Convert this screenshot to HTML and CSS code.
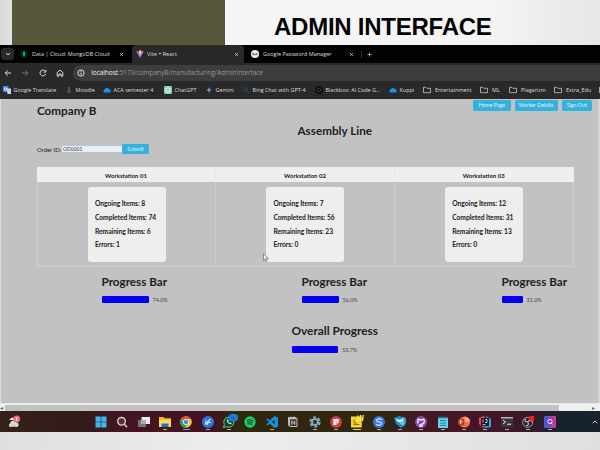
FILE: index.html
```html
<!DOCTYPE html>
<html lang="en">
<head>
<meta charset="utf-8">
<title>Admin Interface</title>
<link rel="stylesheet" href="styles.css">
</head>
<body>
<header class="slide-head">
  <div class="olive"></div>
  <h1>ADMIN INTERFACE</h1>
</header>
<section class="browser">
  <div class="tabs">
    <span class="tab-menu"><svg viewBox="0 0 8 8"><path d="M2 3l2 2 2-2"/></svg></span>
    <div class="tab t1">
      <svg class="fav" viewBox="0 0 8 8"><circle cx="4" cy="4" r="3.5" fill="#05271d"/><path d="M4 .8Q6.2 3.5 4 7Q1.8 3.5 4 .8" fill="#12b879"/></svg>
      <span>Data | Cloud: MongoDB Cloud</span><svg class="x" viewBox="0 0 6 6"><path d="M1 1l4 4M5 1L1 5"/></svg>
    </div>
    <div class="tab t2">
      <svg class="fav" viewBox="0 0 8 8"><path d="M0 1l4 7 4-7-4 .7z" fill="#a66bf4"/><path d="M3 .4l2.5-.2-.6 2H6L4 6l.1-2.5H3z" fill="#ffd343"/></svg>
      <span>Vite + React</span><svg class="x" viewBox="0 0 6 6"><path d="M1 1l4 4M5 1L1 5"/></svg>
    </div>
    <div class="tab t3">
      <svg class="fav" viewBox="0 0 8 8"><circle cx="4" cy="4" r="4" fill="#f3f3f3"/><path d="M1.2 3.4h2M1.2 4.7h5.5M4.5 3.4h2" stroke="#555" stroke-width=".8"/></svg>
      <span>Google Password Manager</span><svg class="x" viewBox="0 0 6 6"><path d="M1 1l4 4M5 1L1 5"/></svg>
    </div>
    <i class="sep"></i>
    <svg class="x plus" viewBox="0 0 6 6"><path d="M3 .5v5M.5 3h5"/></svg>
  </div>
  <div class="address">
    <svg class="nav" viewBox="0 0 8 8"><path d="M7 4H1.2M3.8 1.4L1.2 4l2.6 2.6"/></svg>
    <svg class="nav dim" viewBox="0 0 8 8"><path d="M1 4h5.8M4.2 1.4L6.8 4 4.2 6.6"/></svg>
    <svg class="nav" viewBox="0 0 8 8"><path d="M6.6 5A2.9 2.9 0 1 1 6.3 2.3M6.8 .9v2.2H4.6"/></svg>
    <svg class="nav" viewBox="0 0 8 8"><path d="M1.2 3.5L4 1.1l2.8 2.4v3.6H5V5H3v2.1H1.2z"/></svg>
    <div class="url">
      <svg class="nav" viewBox="0 0 8 8"><circle cx="4" cy="4" r="3.1"/><path d="M4 3.6v2.1M4 2.1v.8"/></svg>
      <span><b>localhost</b>:5173/companyB/manufacturing/AdminInterface</span>
    </div>
  </div>
  <nav class="bookmarks">
    <a class="w62"><svg viewBox="0 0 8 8"><rect width="5.5" height="6" rx=".7" fill="#4b8af1"/><path d="M3.5 2.5H8V8H4.5z" fill="#c9d2df"/><circle cx="2.6" cy="3" r="1.2" fill="none" stroke="#fff" stroke-width=".7"/></svg><span>Google Translate</span></a>
    <a class="w38"><svg viewBox="0 0 8 8"><path d="M3 1h2v2l1 4H2l1-4z" fill="#67502f"/></svg><span>Moodle</span></a>
    <a class="w61"><svg viewBox="0 0 8 8"><path d="M1.5 6.5a1.6 1.6 0 0 1 0-3A2.6 2.6 0 0 1 6 3a1.8 1.8 0 0 1 .5 3.5z" fill="#1596e4"/></svg><span>ACA semester 4</span></a>
    <a class="w41"><svg viewBox="0 0 8 8"><rect width="8" height="8" rx="1" fill="#8ccdb5"/><circle cx="4" cy="4" r="2.2" fill="none" stroke="#e9fff7"/></svg><span>ChatGPT</span></a>
    <a class="w37"><svg viewBox="0 0 8 8"><path d="M4 .8Q4.3 3.7 7.2 4 4.3 4.3 4 7.2 3.7 4.3.8 4 3.7 3.7 4 .8z" fill="#7093ef"/></svg><span>Gemini</span></a>
    <a class="w73"><svg viewBox="0 0 8 8"><g fill="none" stroke="#1d4a6a"><circle cx="3.5" cy="3.5" r="2"/><path d="M5 5l2 2"/></g></svg><span>Bing Chat with GPT-4</span></a>
    <a class="w74"><svg viewBox="0 0 8 8"><circle cx="4" cy="4" r="4" fill="#101010"/><circle cx="4" cy="4" r="1.7" fill="none" stroke="#444" stroke-width=".7"/></svg><span>Blackbox: AI Code G...</span></a>
    <a class="w34"><svg viewBox="0 0 8 8"><path d="M1.5 6.5a1.6 1.6 0 0 1 0-3A2.6 2.6 0 0 1 6 3a1.8 1.8 0 0 1 .5 3.5z" fill="#1596e4"/></svg><span>Kuppi</span></a>
    <a class="w57 folder"><svg viewBox="0 0 8 8"><path d="M.5 1.3h2.4l.9 1h3.7v4.4h-7z"/></svg><span>Entertainment</span></a>
    <a class="w29 folder"><svg viewBox="0 0 8 8"><path d="M.5 1.3h2.4l.9 1h3.7v4.4h-7z"/></svg><span>ML</span></a>
    <a class="w45 folder"><svg viewBox="0 0 8 8"><path d="M.5 1.3h2.4l.9 1h3.7v4.4h-7z"/></svg><span>Plagarizm</span></a>
    <a class="w44 folder"><svg viewBox="0 0 8 8"><path d="M.5 1.3h2.4l.9 1h3.7v4.4h-7z"/></svg><span>Extra_Edu</span></a>
    <a class="folder"><svg viewBox="0 0 8 8"><path d="M.5 1.3h2.4l.9 1h3.7v4.4h-7z"/></svg></a>
  </nav>
</section>
<main class="page">
  <div class="top">
    <h2>Company B</h2>
    <div class="actions"><button class="home">Home Page</button><button class="worker">Worker Details</button><button class="sign">Sign Out</button></div>
  </div>
  <h2 class="line-title">Assembly Line</h2>
  <form class="order"><label>Order ID:</label><input value="OD0001"><button type="button">Submit</button></form>
  <div class="table">
    <div class="th">Workstation 01</div><div class="th">Workstation 02</div><div class="th">Workstation 03</div>
    <div class="td"><div class="card"><p>Ongoing Items: 8</p><p>Completed Items: 74</p><p>Remaining Items: 6</p><p>Errors: 1</p></div></div>
    <div class="td"><div class="card"><p>Ongoing Items: 7</p><p>Completed Items: 56</p><p>Remaining Items: 23</p><p>Errors: 0</p></div></div>
    <div class="td"><div class="card"><p>Ongoing Items: 12</p><p>Completed Items: 31</p><p>Remaining Items: 13</p><p>Errors: 0</p></div></div>
  </div>
  <div class="bars">
    <div class="prog"><h2>Progress Bar</h2><div class="meter"><i style="width:47px"></i><span>74.0%</span></div></div>
    <div class="prog"><h2>Progress Bar</h2><div class="meter"><i style="width:37px"></i><span>56.0%</span></div></div>
    <div class="prog"><h2>Progress Bar</h2><div class="meter"><i style="width:21px"></i><span>31.0%</span></div></div>
  </div>
  <div class="prog overall"><h2>Overall Progress</h2><div class="meter"><i style="width:46.5px"></i><span>53.7%</span></div></div>
  <svg class="cursor" viewBox="0 0 6 9"><path d="M.5.5v6.8l1.6-1.4 1 2.4 1.1-.5-1-2.3h2.2z"/></svg>
</main>
<div class="scroll"><b class="left">◂</b><i></i><b>▸</b></div>
<footer class="taskbar">
  <div class="weather"><svg viewBox="0 0 14 14"><path d="M2 5q4-5 6 0z" fill="#e9e9ee"/><path d="M3 12a2 2 0 0 1 0-3.5 3.5 3.5 0 0 1 6.6-1A2.3 2.3 0 0 1 10 12z" fill="#d9dce5"/><path d="M3 12q4-4 7 0z" fill="#eab05a"/><circle cx="9.7" cy="4" r="3.5" fill="#e8737b"/><path d="M9.7 2.2v3.5" stroke="#fff"/></svg></div>
  <div class="apps">
    <span><svg viewBox="0 0 12 12"><path d="M.5.5h5.2v5.2H.5zM6.3.5h5.2v5.2H6.3zM.5 6.3h5.2v5.2H.5zM6.3 6.3h5.2v5.2H6.3z" fill="#3fb7ed"/></svg></span>
    <span><svg viewBox="0 0 12 12"><circle cx="5.5" cy="5.3" r="3.8" fill="#52303a" stroke="#d8cdd2" stroke-width="1.4"/><path d="M8.3 8.3l2.8 2.9" stroke="#d8cdd2" stroke-width="1.5"/></svg></span>
    <span><svg viewBox="0 0 12 12"><rect x="0" y="4" width="8" height="7" fill="#77777a"/><rect x="3.5" y="1" width="8.5" height="7" fill="#ebebeb"/><path d="M3.5 4H8v4H3.5z" fill="#aaa"/></svg></span>
    <span class="run amber"><svg viewBox="0 0 12 12"><path d="M0 1h4.5l1.3 1.3H12V11H0z" fill="#f6b92d"/><path d="M0 4h12v7H0z" fill="#ffd95f"/><path d="M2.5 11V7.5h7V11z" fill="#2370bc"/></svg></span>
    <span class="run blue"><svg viewBox="0 0 12 12"><circle cx="6" cy="6" r="5.8" fill="#f3c63e"/><path d="M6 6L1 3A5.8 5.8 0 0 1 11 3H6z" fill="#de5144"/><path d="M1 3a5.8 5.8 0 0 0 4 8.7L8 7 4 7z" fill="#32a05c"/><circle cx="6" cy="6" r="2.7" fill="#4185ef" stroke="#fff" stroke-width=".8"/></svg></span>
    <span class="run"><svg viewBox="0 0 12 12"><circle cx="6" cy="6" r="6" fill="#2874e8"/><path d="M3 8.5L8.5 3M3 6.5h6M5 9L7 5M3.5 4.5l1 1" fill="none" stroke="#cfe4ff" stroke-width="1.2"/></svg></span>
    <span class="run"><svg class="chat" viewBox="0 0 12 12"><path d="M.5 11.5l.9-3A5 5 0 1 1 3.5 10.6z" fill="#123d2a" stroke="#6ec790"/><path d="M3.6 3.7q0 4 4.5 4.8l.7-1.6-1.5-.7-.7.7-1.4-1.3.6-.8-.7-1.6z" fill="#a5e4b6"/><rect x="5.5" y="-2" width="9.5" height="7.5" rx="3.7" fill="#217ed8"/><path d="M8 1h4M8 2.8h4" stroke="#1c5796" stroke-width=".8"/></svg></span>
    <span><svg viewBox="0 0 12 12"><circle cx="6" cy="6" r="5.7" fill="#20cf64"/><path d="M2.7 4.1q3.8-1 6.8.6M3 6.1q3.3-.8 6 .6M3.4 8q2.5-.6 4.8.5" fill="none" stroke="#103c20"/></svg></span>
    <span class="run amber"><svg viewBox="0 0 12 12"><path d="M8.5 0L12 1.4v9.2L8.5 12 3.8 7.7 1.4 9.6.2 8.8 3 6 .2 3.2l1.2-.8 2.4 1.9zM8.7 3.7L5.7 6l3 2.3z" fill="#188fd7"/></svg></span>
    <span><svg viewBox="0 0 12 12"><path d="M1 1l7-.3L10.5 2.5V11H3L1 9z" fill="#bbb"/><path d="M3 3.3h6.5V10H3z" fill="#3a3835"/><path d="M4.8 8.7V4.9l2.9 3.5V4.8" fill="none" stroke="#ccc"/></svg></span>
    <span class="run"><svg viewBox="0 0 12 12"><circle cx="6" cy="6" r="4.6" fill="none" stroke="#8d9baa" stroke-width="2.3" stroke-dasharray="3 1.8"/><circle cx="6" cy="6" r="3" fill="#2d3c49" stroke="#91aeca" stroke-width="1.6"/></svg></span>
    <span class="run"><svg viewBox="0 0 12 12"><circle cx="6" cy="6" r="5.9" fill="#dc3940"/><path d="M3.3 3h5.4v3.3L6 9H3.3z" fill="#fff"/><path d="M6 9V6.3h2.7z" fill="#f3a3a6"/></svg></span>
    <span class="run wide"><svg class="chat" viewBox="0 0 12 12"><path d="M0 .5h10.8v11H0z" fill="#f5d532"/><path d="M2.5 8.5h6M3 3.5V7h3" fill="none" stroke="#8d731d"/><path d="M7-.5l-.6 6M9.6-1L9 5M12.2-1l-.8 6" stroke="#ffe763" stroke-width="1.4"/></svg></span>
    <span class="run"><svg viewBox="0 0 12 12"><circle cx="6" cy="6" r="6" fill="#3975dc"/><path d="M9 3.8Q5.5 1.5 3.4 4.2 3 5.5 6 6t2.7 1.8Q6.5 10.5 3 8.2" fill="none" stroke="#b9dbff" stroke-width="1.3"/></svg></span>
    <span class="run"><svg viewBox="0 0 12 12"><path d="M0 2l5-2 7 2v6l-5 4-5-4z" fill="#218ac3"/><path d="M1 2q5 4 9-1L8 7 4 6z" fill="#d8f3fb"/><path d="M5 7l6-4-1 7z" fill="#65c9e4"/></svg></span>
    <span class="run"><svg viewBox="0 0 12 12"><circle cx="6" cy="6" r="6" fill="#874bad"/><path d="M3.2 7.5Q2 5 3.3 3l1.5.8h2.4L8.7 3Q10 5 8.8 7.2 7.8 8 7 8v2H5V8" fill="none" stroke="#fff" stroke-width="1.3"/></svg></span>
    <span class="run"><svg viewBox="0 0 12 12"><path d="M1 1h10v11H1z" fill="#65d0ea"/><path d="M1 .7h10v1.6H1z" fill="#246a91"/><path d="M3 4.5h6M3 7h6M3 9.4h6" stroke="#217aa0"/></svg></span>
    <span class="run"><svg viewBox="0 0 12 12"><circle cx="6.5" cy="6" r="5.6" fill="#f07142"/><path d="M6.5.4A5.6 5.6 0 0 1 12 6H6.5z" fill="#ffa084"/><rect y="3" width="6.3" height="6.3" rx="1" fill="#b93a1c"/><path d="M2.3 8V4.6h1.2q1.3 1-.1 1.8H2.3" fill="none" stroke="#fff" stroke-width=".8"/></svg></span>
    <span class="run"><svg viewBox="0 0 12 12"><path d="M0 2l5-2 3 5-4 7-4-4z" fill="#ed4466"/><path d="M7 0l5 3v8l-7 1 3-7z" fill="#28a9ed"/><path d="M2 2h8v8H2z" fill="#17131b"/><path d="M4 3.5v3M6.3 3.5H8v3H6M3.5 8.7h3" fill="none" stroke="#fff" stroke-width=".8"/></svg></span>
    <span class="run"><svg viewBox="0 0 12 12"><path d="M0 1h12v10H0z" fill="#363638"/><path d="M0 1h12v1.5H0z" fill="#b4b4b4"/><path d="M2 4l2.5 2L2 8M6 8.2h4" fill="none" stroke="#eee"/></svg></span>
    <span class="run"><svg viewBox="0 0 12 12"><circle cx="5.7" cy="6.3" r="5" fill="#25252b" stroke="#aaa" stroke-width=".9"/><path d="M5.7 6Q2 6 3.4 2.8M5.7 6Q8 2.8 10 6M5.7 6q2 3-1.6 4" fill="none" stroke="#c4c4c4" stroke-width="1.2"/><circle cx="9.9" cy="2.2" r="3" fill="#ef1d24"/></svg></span>
    <span class="run"><svg viewBox="0 0 12 12"><defs><linearGradient id="g"><stop stop-color="#2565e8"/><stop offset="1" stop-color="#e83676"/></linearGradient></defs><rect width="12" height="12" rx="1" fill="url(#g)"/><rect x="2" y="2" width="8" height="8" rx="2" fill="#843cc1"/><circle cx="6" cy="5.5" r="2.1" fill="none" stroke="#eee"/><path d="M6.8 6.5l1.7 2" stroke="#eee"/></svg></span>
  </div>
  <svg class="chev" viewBox="0 0 6 6"><path d="M.7 4.3L3 2l2.3 2.3"/></svg>
</footer>
</body>
</html>
```
FILE: styles.css
```css
* { box-sizing: border-box; }
body { margin: 0; width: 600px; height: 450px; overflow: hidden; background: linear-gradient(100deg, #dadada, #ededed 45%, #dfdfdf); font-family: Lato, "Liberation Sans", sans-serif; color: #202020; }
svg { display: block; flex: none; }
h1, h2, p { margin: 0; }
h2 { font-size: 11.7px; line-height: 14px; font-weight: 700; white-space: nowrap; }

.slide-head { height: 45px; display: flex; padding-left: 12px; background: linear-gradient(90deg, #d9d9d7 0, #e1e1df 12px, #f5f5f5 224px, #f4f4f4 490px, #e6e6e6 600px); }
.olive { width: 212.5px; background: #58563b; }
h1 { margin: 13px 0 0 49.5px; font: 700 24px/28px "Liberation Sans", sans-serif; letter-spacing: -.25px; white-space: nowrap; color: #050505; }

.browser { height: 54px; background: #292929; color: #ddd; font-family: "Open Sans", sans-serif; }
.tabs { height: 18px; display: flex; align-items: center; background: #020202; font-size: 5.5px; }
.tab-menu { width: 13px; height: 12px; margin-left: 1px; border-radius: 3px; background: #292929; display: grid; place-items: center; }
.tab-menu svg { width: 8px; height: 8px; fill: none; stroke: #ddd; }
.tab { height: 18px; display: flex; align-items: center; white-space: nowrap; }
.tab span { flex: 1; }
.fav { width: 8px; height: 8px; margin-right: 3px; }
.x { width: 5px; height: 5px; fill: none; stroke: #ddd; stroke-width: .8; }
.t1 { width: 118px; padding: 0 8px 0 6px; }
.t1 .fav { margin-right: 4px; }
.t2 { width: 112px; padding: 0 5px 0 4px; background: #292929; border-radius: 4px 4px 0 0; }
.t3 { width: 117px; padding: 0 7px; }
.t3 .fav { margin-right: 4px; }
.sep { width: 1px; height: 7px; background: #303030; }
.plus { margin-left: 5px; }
.address { height: 18px; display: flex; align-items: center; gap: 9.3px; padding: 1px 0 0 4px; }
.nav { width: 8px; height: 8px; fill: none; stroke: #ddd; stroke-width: 1; }
.dim { stroke: #777; }
.url { flex: 1; height: 16px; display: flex; align-items: center; gap: 6px; padding-left: 4px; border-radius: 8px 0 0 8px; background: #3d3d3d; color: #969696; font-size: 6.5px; white-space: nowrap; }
.url b { font-weight: 400; color: #eee; }
.url span { letter-spacing: -.05px; }
.bookmarks { height: 18px; padding-left: 3px; display: flex; align-items: center; font-size: 5.45px; white-space: nowrap; overflow: hidden; }
.bookmarks a { flex: none; display: flex; align-items: center; gap: 2.5px; }
.bookmarks svg { width: 8px; height: 8px; }
.folder svg { fill: none; stroke: #c8c8c8; stroke-width: .8; }
.bookmarks .folder { gap: 4px; }
.w62 { width: 62px; } .w38 { width: 38px; } .w61 { width: 61px; } .w41 { width: 41px; }
.w37 { width: 37px; } .w73 { width: 73px; } .w74 { width: 74px; } .w34 { width: 34px; }
.w57 { width: 57px; } .w29 { width: 29px; } .w45 { width: 45px; } .w44 { width: 45px; }

.page { height: 304px; position: relative; background: #c2c2c2; border-left: 1px solid #dcdcdc; border-right: 2px solid #d5d5d5; padding: 1px 0 0 36px; }
.top { display: flex; justify-content: space-between; height: 23px; }
.top h2 { margin-top: 3px; }
.actions { display: flex; gap: 4px; padding-right: 6px; }
button { height: 10.5px; padding: 0; border: 0; border-radius: 1.5px; background: #35b1dc; color: #dcf4fc; font: 5.3px/10px Lato, sans-serif; white-space: nowrap; }
.home { width: 37.5px; } .worker { width: 43px; } .sign { width: 30.5px; }
.line-title { margin-left: 260.5px; }
.order { height: 11px; margin-top: 6.5px; display: flex; align-items: center; font-size: 5.9px; }
.order label { width: 25px; white-space: nowrap; }
.order input { width: 60px; height: 6px; padding: 0 1px; border: 0; background: #e6edfb; color: #444; font: 5px/6px Lato, sans-serif; }
.order button { width: 27px; }
.table { width: 536.5px; height: 100px; margin-top: 12.5px; display: grid; grid-template-columns: 179px 179px 178.5px; grid-template-rows: 15px 84.5px; }
.th { display: grid; place-items: center; padding-top: 1px; background: #efefef; font-size: 6px; font-weight: 700; border-right: 1px solid #e8e8e8; }
.td { border: solid #cecece; border-width: 0 1px 1px 0; padding-top: 4.5px; }
.td:nth-child(4) { border-left-width: 1px; }
.card { width: 78px; height: 75.5px; margin: 0 auto; padding: 10.5px 0 0 7.5px; background: #eee; border-radius: 3px; font-size: 6.7px; font-weight: 700; letter-spacing: -.04px; }
.card p { line-height: 13.8px; white-space: nowrap; }
.bars { display: flex; margin: 7px 0 0 64.5px; }
.bars .prog { flex: 0 0 200px; }
.bars .prog:last-child { flex-basis: 90px; }
.meter { display: flex; align-items: center; gap: 4px; height: 7px; margin-top: 8px; font-size: 5.5px; color: #444; }
.meter i { height: 7px; background: #0200ed; border-radius: 1.2px; }
.overall { margin: 21px 0 0 254.5px; }
.overall h2 { font-size: 11.85px; }
.cursor { position: absolute; left: 262px; top: 154px; width: 6px; height: 9px; fill: #eee; stroke: #555; stroke-width: .6; }
.scroll { height: 8px; display: flex; align-items: center; background: #f0f0f0; border-top: 1px solid #e8e8e8; font: 6px/7px "DejaVu Sans", sans-serif; color: #666; }
.scroll b { width: 8px; margin-left: auto; font-weight: 400; }
.scroll .left { width: 5px; margin: 0; }
.scroll i { width: 554px; height: 6px; background: #c1c3c2; }

.taskbar { height: 21px; display: flex; align-items: center; background: linear-gradient(90deg, #37211c 0, #321a18 80px, #451422 130px, #42131e 215px, #30270f 230px, #302611 385px, #431920 415px, #44152a 500px, #301b2a 540px, #18222f 560px, #17222e); }
.weather { width: 90.3px; padding-left: 7px; }
.weather svg { width: 14px; height: 14px; }
.apps { display: flex; height: 21px; }
.apps span { width: 21.37px; display: flex; flex-direction: column; align-items: center; padding-top: 5px; }
.apps svg { width: 12px; height: 12px; }
.apps .chat { overflow: visible; }
.run::after { content: ""; width: 4px; height: 1px; margin-top: 1px; background: #aaa; }
.run.amber::after { background: #d4a43c; }
.run.blue::after { width: 7px; background: #4ba9e5; }
.run.wide::after { width: 8px; background: #f2d438; }
.chev { width: 6px; height: 6px; margin-left: 32px; fill: none; stroke: #ccc; }
```
